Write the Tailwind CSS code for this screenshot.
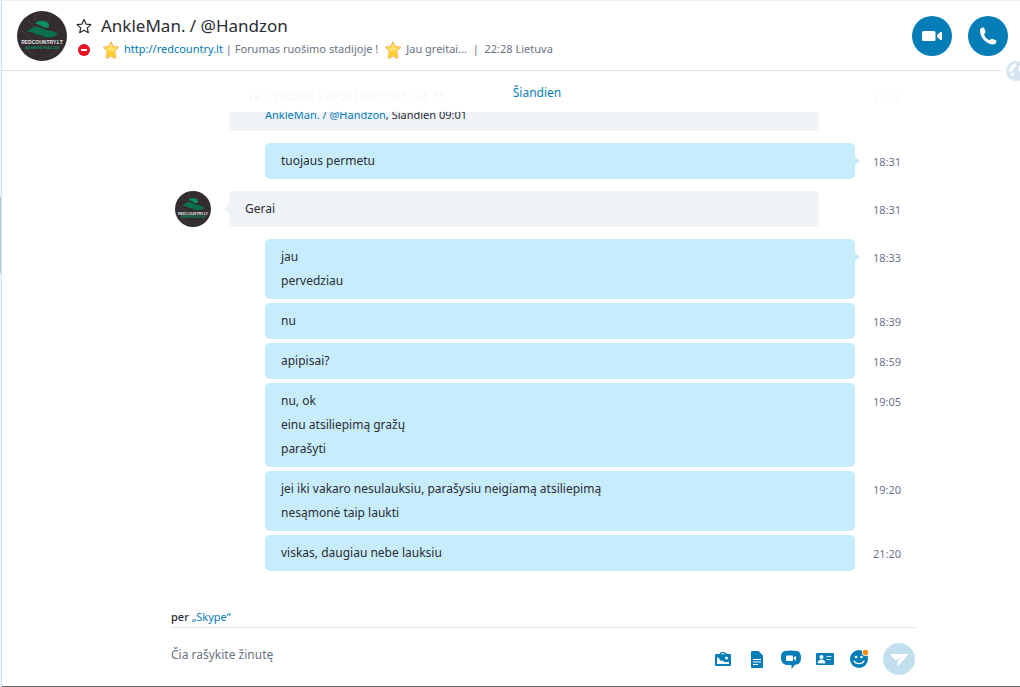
<!DOCTYPE html>
<html lang="lt">
<head>
  <meta charset="UTF-8" />
  <meta name="viewport" content="width=device-width, initial-scale=1.0" />
  <title>AnkleMan. / @Handzon</title>
  <script src="https://cdn.jsdelivr.net/npm/@tailwindcss/browser@4"></script>
</head>
<body class="h-screen flex bg-white text-[#2b2c33] text-xs font-['Noto_Sans','Open_Sans',sans-serif]">

  <!-- Shared avatar artwork -->
  <svg class="hidden" aria-hidden="true">
    <symbol id="avatar" viewBox="0 0 50 50">
      <circle cx="25" cy="25" r="25" fill="#332d31" />
      <path d="M4 20l12 8M34 3l-6 14M46 17l-12 8M10 9l9 8M8 38l9 5M40 40l-8 6M20 2l-2 8" stroke="#3b3438" stroke-width="2" fill="none" />
      <path d="M18 13c3-4 10-4 13-1 1.500 2 1 3 .5 4.500-3 .5-5 0-7-1.500-2-1.500-4-2-6.500-2z" fill="#08905f" />
      <path d="M10 21c4-5 8-6 12-5 4 1 6 3 9 3.500 4 .5 6 .5 10 4-4 2.500-8 4-13 2.500-3-2-6-2.500-9-2.500-2-2-5-3-9-2.500z" fill="#08704b" />
      <text x="25" y="33" text-anchor="middle" font-size="5" font-weight="700" fill="#e6e3e5" font-family="Liberation Sans, sans-serif">REDCOUNTRY.LT</text>
      <text x="25" y="38" text-anchor="middle" font-size="4" font-weight="700" fill="#0b8a5e" font-family="Liberation Sans, sans-serif">ADMINISTRACIJA</text>
    </symbol>
    <symbol id="gold-star" viewBox="0 0 18 20">
      <path d="M9 1.500l2.300 4.800 5.400.8-3.900 4 1 6.400c.1.900-.8 1.200-1.500.8L9 16l-3.300 2.300c-.7.4-1.600.1-1.500-.8l1-6.400-3.900-4 5.400-.8z" fill="#ffd02e" stroke="#f3b77c" stroke-linejoin="round" />
      <path d="M9 3.500l1.600 4 4 .6-3 2.900H6.400L3.400 8.100l4-.6z" fill="#ffe36b" />
    </symbol>
    <symbol id="tail" viewBox="0 0 5 14">
      <path d="M0 0c0 4 2 4.500 4.500 6.200q.8.800 0 1.600C2 9.500 0 10 0 14z" fill="currentColor" />
    </symbol>
  </svg>

  <div class="w-[2px] shrink-0 border-r border-[#d5e4ef] bg-[#eef5fa] flex flex-col">
    <div class="mt-[197px] h-[76px] bg-[#b0c8dc]"></div>
  </div>

  <main class="relative flex-1 min-w-0 flex flex-col border-t border-t-[#eee] border-b border-b-[#666]">

    <header class="shrink-0">
      <div class="h-[69px] flex items-center pl-[15px] pr-3">
        <svg class="size-[50px] shrink-0"><use href="#avatar" /></svg>
        <div class="flex-1 min-w-0 pl-[9px] pt-1">
          <div class="flex items-center h-6">
            <button type="button" aria-label="Favorite" class="size-4 shrink-0">
              <svg viewBox="0 0 16 16" class="size-4" fill="none" stroke="#2b2c33" stroke-width="1.200" stroke-linejoin="round"><path d="M8 1.500l2 4.600 5 .5-3.800 3.300 1.100 4.800L8 12.200l-4.300 2.500 1.100-4.800L1 6.600l5-.5z" /></svg>
            </button>
            <h1 class="pl-[9px] text-[17px] leading-6 truncate">AnkleMan. / @Handzon</h1>
          </div>
          <div class="flex items-center h-6 text-[11px] text-[#6a7384] whitespace-nowrap">
            <svg viewBox="0 0 12 12" class="size-3 shrink-0 ml-[2px]"><circle cx="6" cy="6" r="6" fill="#e81123" /><path d="M3 6h6" stroke="#fff" stroke-width="2" /></svg>
            <svg class="w-[18px] h-5 shrink-0 ml-3 mr-1"><use href="#gold-star" /></svg>
            <a href="#" class="text-[#0078b4]">http://redcountry.lt</a>
            <span class="whitespace-pre"> | Forumas ruošimo stadijoje !</span>
            <svg class="w-[18px] h-5 shrink-0 ml-[6px] mr-1"><use href="#gold-star" /></svg>
            <span class="whitespace-pre">Jau greitai...  |  22:28 Lietuva</span>
          </div>
        </div>
        <div class="flex gap-4">
          <button type="button" aria-label="Video call" class="size-10 rounded-full bg-[#067db7] grid place-items-center">
            <svg viewBox="0 0 20 10" class="w-5 h-[10px]" fill="#fff"><rect width="13.500" height="10" rx="1.500" /><path d="M15 4l3.500-3H20v8h-1.500L15 6z" /></svg>
          </button>
          <button type="button" aria-label="Call" class="size-10 rounded-full bg-[#067db7] grid place-items-center">
            <svg viewBox="0 0 18 18" class="size-[18px]" fill="#fff"><path d="M1 3.500C1 1.500 2.500.8 4 .6c.8 0 1.200.5 1.500 1.200l1 2.800c.2.700 0 1.200-.5 1.700l-1 1c.8 2.800 3 5 5.700 6l1.200-1.100c.5-.5 1-.6 1.700-.3l2.800 1.200c.7.300 1.100.8.900 1.600-.3 1.800-1.300 2.800-3 2.800C7.500 17.300.8 10.500 1 3.500z" /></svg>
          </button>
        </div>
      </div>
      <div class="h-px mr-[19px] bg-[#d5e4ef]"></div>
    </header>

    <div class="absolute z-20 right-0 top-[60px] w-[14px] h-5 overflow-hidden">
      <svg viewBox="0 0 20 20" class="size-5"><circle cx="10" cy="10" r="10" fill="#d5e4ef" /><path d="M8 3c2-1 3 0 2 2L8 7l-1 3-4 1c-1-3 2-7 5-8zM6 12c1-1 2 0 2 1l-1 2-3-1zM13 5c2-1 5-1 5 2v6c-1 2-3 2-3 0 0-1-4-5-2-8z" fill="#fff" /></svg>
    </div>

    <section class="relative flex-1 min-h-0 overflow-hidden pl-[169px] pr-[105px]">
      <!-- Day marker stays above the scrolled messages -->
      <div class="absolute z-10 inset-x-0 top-0 h-[41px] pl-[157px] pr-[105px] bg-white/95 text-center leading-[44px] text-[#067db7]">Šiandien</div>

      <ol class="pt-2 flex flex-col gap-3">
        <li class="grid grid-cols-[36px_1fr_42px] gap-x-[18px] pl-1">
          <blockquote class="col-start-2 mr-9 px-9 pt-[6px] pb-[10px] rounded-[5px] bg-[#eff2f7]">
            <p class="relative leading-6 text-[#66686f]">
              <svg viewBox="0 0 10 7" class="absolute -left-4 top-2 w-[10px] h-[7px]" fill="currentColor"><path d="M4 0C1 1 0 3 .3 5c.3 2.500 4 2.500 4 0C4.300 3.500 3 3 2 3.200 2 2 3 1 4 .7zM9.500 0c-3 1-4 3-3.700 5 .3 2.500 4 2.500 4 0 0-1.500-1.300-2-2.300-1.800 0-1.200 1-2.200 2-2.500z" /></svg>
              Sąskaita: EVP0410001085724
              <svg viewBox="0 0 10 7" class="inline w-[10px] h-[7px] ml-[2px] mb-1 rotate-180" fill="currentColor"><path d="M4 0C1 1 0 3 .3 5c.3 2.500 4 2.500 4 0C4.300 3.500 3 3 2 3.200 2 2 3 1 4 .7zM9.500 0c-3 1-4 3-3.700 5 .3 2.500 4 2.500 4 0 0-1.500-1.300-2-2.300-1.800 0-1.200 1-2.200 2-2.500z" /></svg>
            </p>
            <p class="text-[11px] leading-3"><a href="#" class="text-[#067db7]">AnkleMan. / @Handzon</a>, Šiandien 09:01</p>
          </blockquote>
          <time class="pt-[7px] text-[11px] leading-6 text-[#6e7390]">18:28</time>
        </li>

        <li class="grid grid-cols-[36px_1fr_42px] gap-x-[18px] pl-1">
          <div class="relative col-start-2 ml-9 px-4 py-[6px] rounded-[5px] bg-[#c7edfc] leading-6">
            <p>tuojaus permetu</p>
            <svg class="absolute left-full top-[11px] w-[5px] h-[14px] text-[#c7edfc]"><use href="#tail" /></svg>
          </div>
          <time class="pt-[7px] text-[11px] leading-6 text-[#6e7390]">18:31</time>
        </li>

        <li class="grid grid-cols-[36px_1fr_42px] gap-x-[18px] pl-1">
          <svg class="size-9"><use href="#avatar" /></svg>
          <div class="relative mr-9 px-4 py-[6px] rounded-[5px] bg-[#eff2f7] leading-6">
            <p>Gerai</p>
            <svg class="absolute right-full top-[11px] w-[5px] h-[14px] rotate-180 text-[#eff2f7]"><use href="#tail" /></svg>
          </div>
          <time class="pt-[7px] text-[11px] leading-6 text-[#6e7390]">18:31</time>
        </li>

        <li>
          <ol class="flex flex-col gap-1">
            <li class="grid grid-cols-[36px_1fr_42px] gap-x-[18px] pl-1">
              <div class="relative col-start-2 ml-9 px-4 py-[6px] rounded-[5px] bg-[#c7edfc] leading-6">
                <p>jau</p>
                <p>pervedziau</p>
                <svg class="absolute left-full top-[11px] w-[5px] h-[14px] text-[#c7edfc]"><use href="#tail" /></svg>
              </div>
              <time class="pt-[7px] text-[11px] leading-6 text-[#6e7390]">18:33</time>
            </li>
            <li class="grid grid-cols-[36px_1fr_42px] gap-x-[18px] pl-1">
              <div class="col-start-2 ml-9 px-4 py-[6px] rounded-[5px] bg-[#c7edfc] leading-6">
                <p>nu</p>
              </div>
              <time class="pt-[7px] text-[11px] leading-6 text-[#6e7390]">18:39</time>
            </li>
            <li class="grid grid-cols-[36px_1fr_42px] gap-x-[18px] pl-1">
              <div class="col-start-2 ml-9 px-4 py-[6px] rounded-[5px] bg-[#c7edfc] leading-6">
                <p>apipisai?</p>
              </div>
              <time class="pt-[7px] text-[11px] leading-6 text-[#6e7390]">18:59</time>
            </li>
            <li class="grid grid-cols-[36px_1fr_42px] gap-x-[18px] pl-1">
              <div class="col-start-2 ml-9 px-4 py-[6px] rounded-[5px] bg-[#c7edfc] leading-6">
                <p>nu, ok</p>
                <p>einu atsiliepimą gražų</p>
                <p>parašyti</p>
              </div>
              <time class="pt-[7px] text-[11px] leading-6 text-[#6e7390]">19:05</time>
            </li>
            <li class="grid grid-cols-[36px_1fr_42px] gap-x-[18px] pl-1">
              <div class="col-start-2 ml-9 px-4 py-[6px] rounded-[5px] bg-[#c7edfc] leading-6">
                <p>jei iki vakaro nesulauksiu, parašysiu neigiamą atsiliepimą</p>
                <p>nesąmonė taip laukti</p>
              </div>
              <time class="pt-[7px] text-[11px] leading-6 text-[#6e7390]">19:20</time>
            </li>
            <li class="grid grid-cols-[36px_1fr_42px] gap-x-[18px] pl-1">
              <div class="col-start-2 ml-9 px-4 py-[6px] rounded-[5px] bg-[#c7edfc] leading-6">
                <p>viskas, daugiau nebe lauksiu</p>
              </div>
              <time class="pt-[7px] text-[11px] leading-6 text-[#6e7390]">21:20</time>
            </li>
          </ol>
        </li>
      </ol>
    </section>

    <footer class="shrink-0 pl-[169px] pr-[105px]">
      <p class="h-[18px] text-[11px] leading-4 font-medium">per <a href="#" class="font-normal text-[#067db7]">„Skype“</a></p>
      <form class="flex items-center border-t border-[#d5e4ef] pt-[15px] pb-[11px]">
        <input type="text" aria-label="Čia rašykite žinutę" placeholder="Čia rašykite žinutę" class="flex-1 min-w-0 h-8 pb-[10px] outline-none placeholder:text-[#6a7384]" />
        <div class="flex items-center gap-[14px] text-[#067db7]">
          <button type="button" aria-label="Photo" class="size-5">
            <svg viewBox="0 0 20 20" class="size-5"><path d="M3 5h3.500C7 3.500 8 3 10 3s3 .5 3.500 2H17q1 0 1 1v10q0 1-1 1H3q-1 0-1-1V6q0-1 1-1z" fill="currentColor" /><path d="M8 5.200c.3-.8 1-1 2-1s1.700.2 2 1zM4 15V8.500c2 0 2.500 1.500 3.500 3.500 1.500-1 3 .2 4 1h4.500v2z" fill="#fff" /><circle cx="13.500" cy="9" r="1.500" fill="#fff" /></svg>
          </button>
          <button type="button" aria-label="File" class="size-5">
            <svg viewBox="0 0 20 20" class="size-5"><path d="M5 2h6.500L16 6.500V18q0 1-1 1H5q-1 0-1-1V3q0-1 1-1z" fill="currentColor" /><path d="M6 10.500h8M6 13h8M6 15.500h5" stroke="#fff" /></svg>
          </button>
          <button type="button" aria-label="Video message" class="size-5">
            <svg viewBox="0 0 20 20" class="size-5"><path d="M4 2Q10 1 16 2c3 .5 4 3.500 4 6.500 0 5-2 7-6 7.300L10.500 20v-4C4 16.500 0 15 0 8.500 0 5 1 2.500 4 2z" fill="currentColor" /><rect x="5" y="6.500" width="7" height="5.500" rx="1" fill="#fff" /><path d="M12.800 8.500L15 6.800v5L12.800 10z" fill="#fff" /></svg>
          </button>
          <button type="button" aria-label="Contact" class="size-5">
            <svg viewBox="0 0 20 20" class="size-5"><rect x="1" y="4" width="18" height="12" rx="1" fill="currentColor" /><circle cx="6.500" cy="8" r="2" fill="#fff" /><path d="M3 14c0-2 1-3 3.500-3s3.500 1 3.500 3zM11.500 7.500h5M11.500 10.500h4" fill="#fff" stroke="#fff" stroke-width=".8" /></svg>
          </button>
          <button type="button" aria-label="Emoticons" class="size-5">
            <svg viewBox="0 0 20 20" class="size-5"><circle cx="10" cy="10" r="9" fill="currentColor" /><circle cx="7" cy="8" r="1.300" fill="#fff" /><circle cx="12.500" cy="8" r="1.300" fill="#fff" /><path d="M5 12c1.500 3.500 8.500 3.500 10 0" fill="none" stroke="#fff" stroke-width="1.300" stroke-linecap="round" /><circle cx="16.500" cy="3.500" r="3.500" fill="#fff" /><circle cx="16.500" cy="3.500" r="2.700" fill="#ff8c00" /></svg>
          </button>
          <button type="submit" aria-label="Send" class="size-8 rounded-full bg-[#c1dfed]">
            <svg viewBox="0 0 32 32" class="size-8" fill="#fff"><path d="M8.500 11h16q1 0 .5.800L15.500 22.500q-1 .8-1-.5v-4l5-4-6.500 3q-1 .2-1.500-.5L7.800 12q-.3-1 .7-1z" /></svg>
          </button>
        </div>
      </form>
    </footer>
  </main>

</body>
</html>
